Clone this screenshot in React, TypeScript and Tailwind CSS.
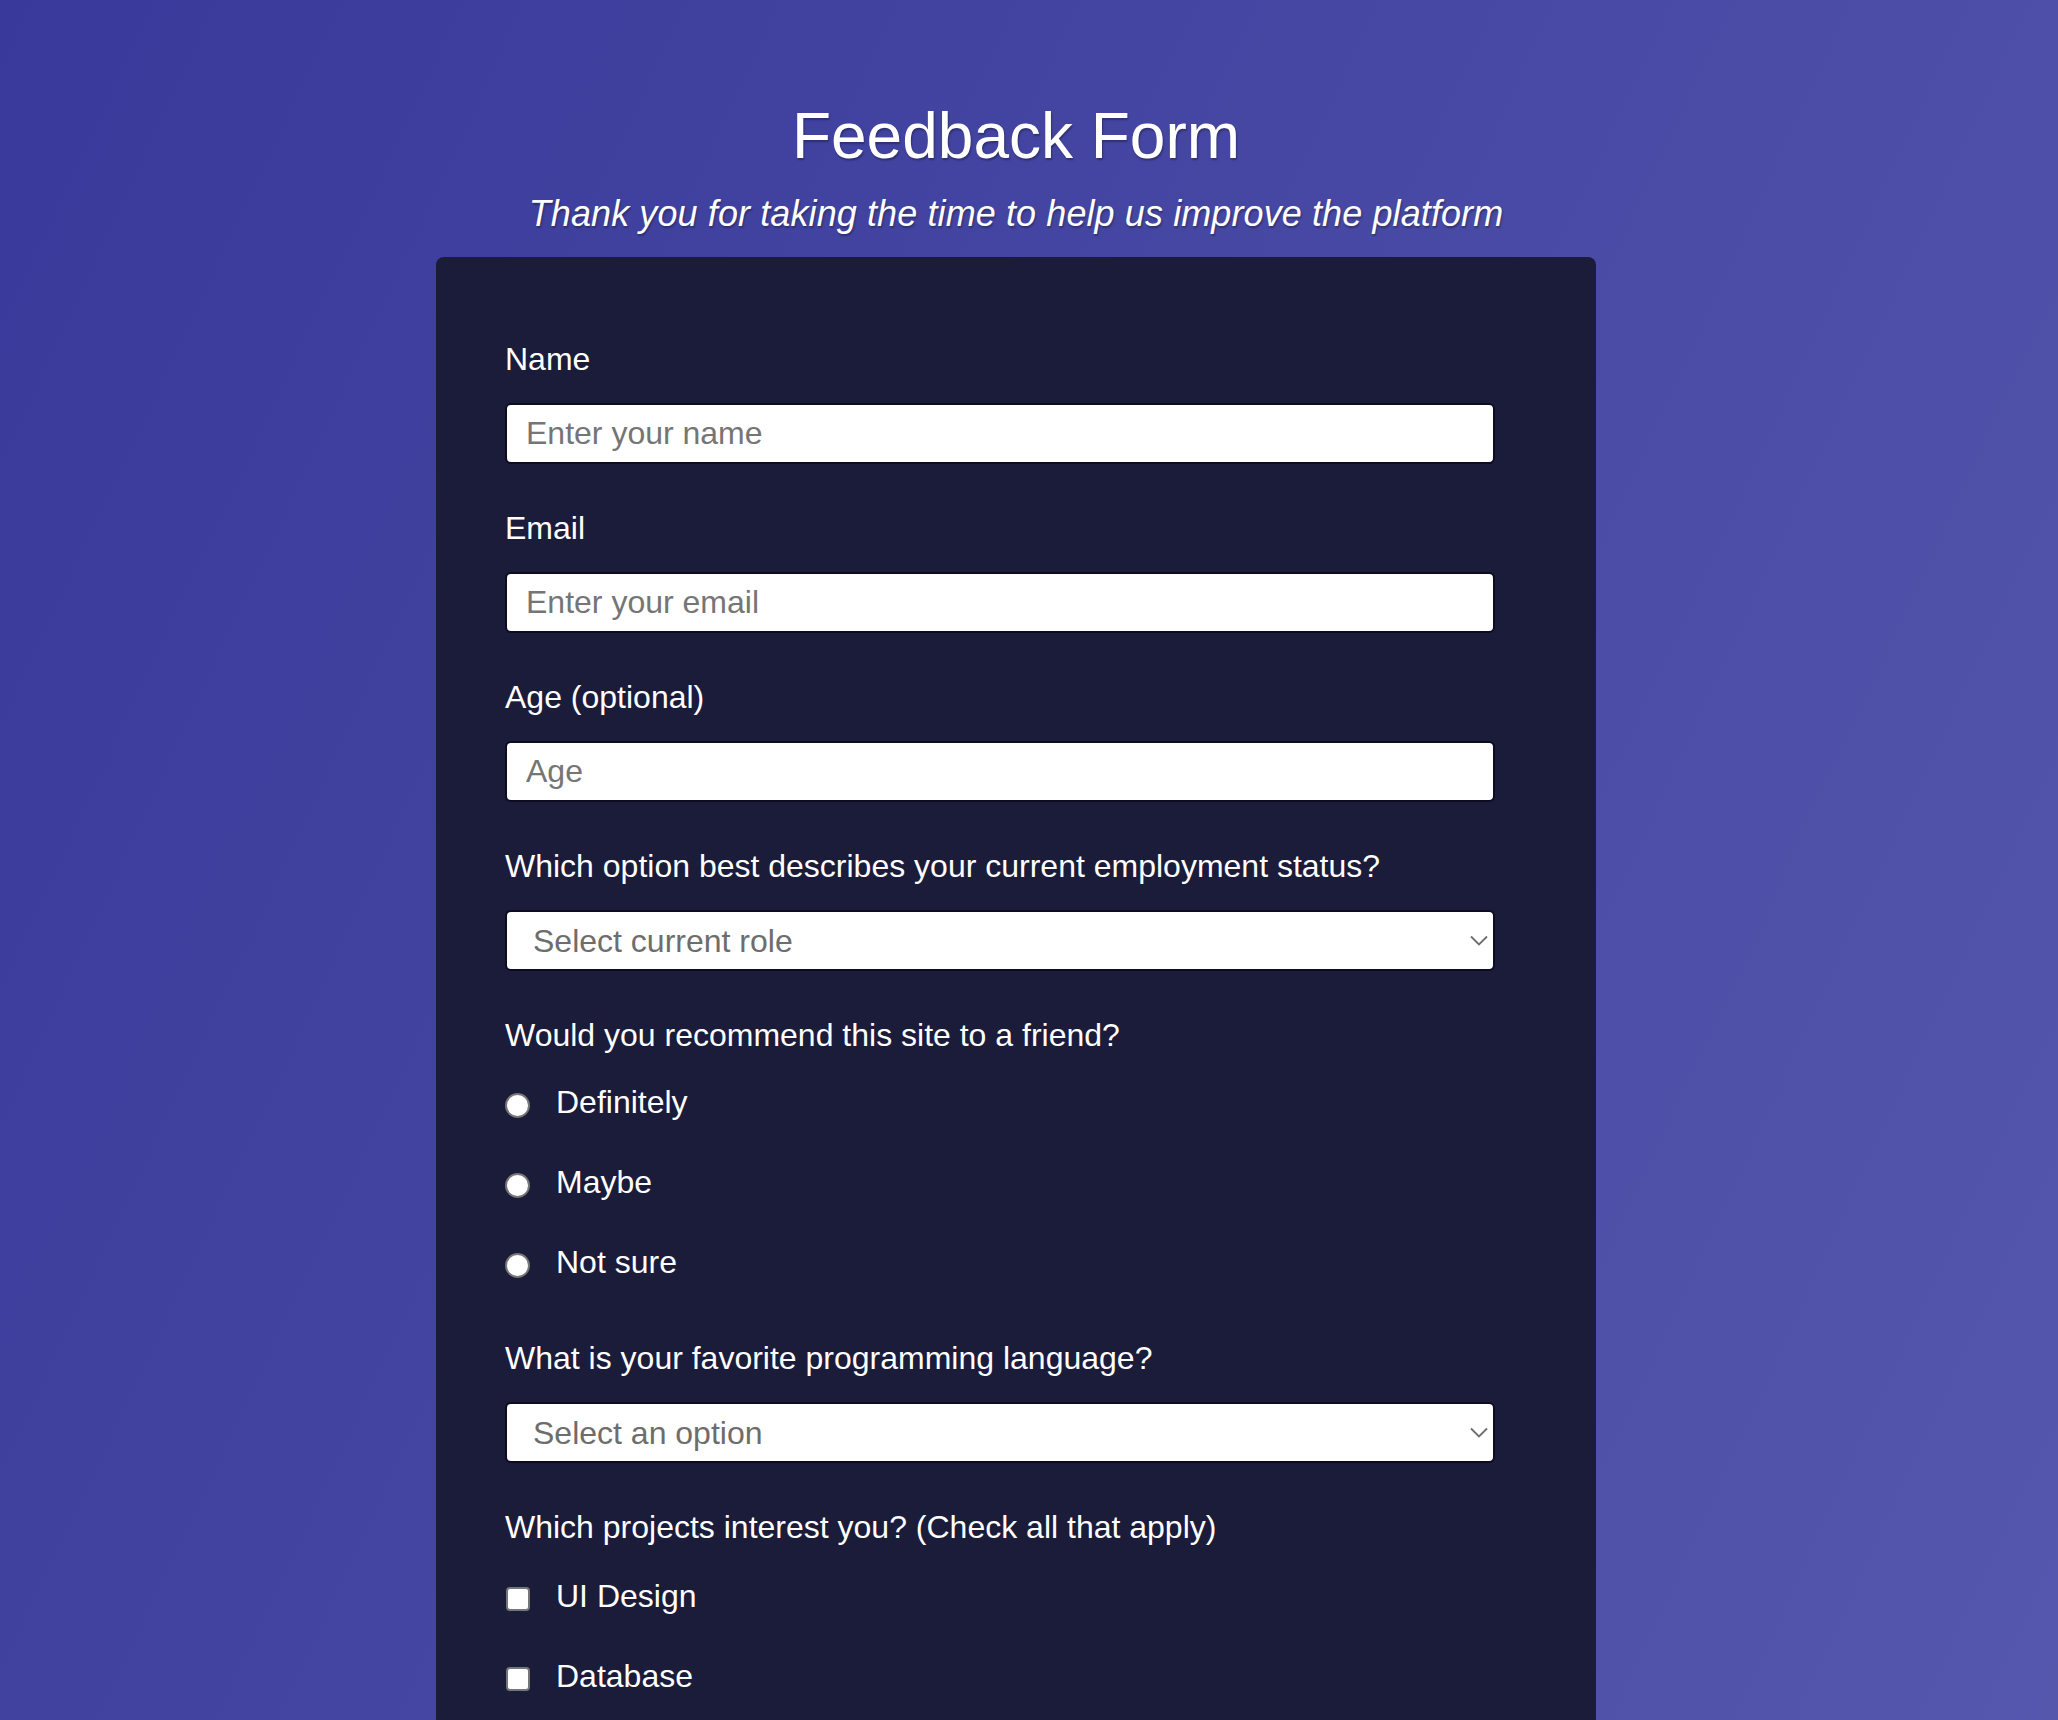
import React from 'react';

const inputClass =
  'block w-[990px] h-[61px] rounded-[6px] border-2 border-[#0c0b22] bg-white pl-[19px] text-[32px] leading-[36px] text-[#222] placeholder:text-[#757575] outline-none';

function Label({ children, htmlFor }: { children: React.ReactNode; htmlFor?: string }) {
  return (
    <label htmlFor={htmlFor} className="block text-[32px] leading-[36px] text-white">
      {children}
    </label>
  );
}

function Field({ label, id, children }: { label: string; id?: string; children: React.ReactNode }) {
  return (
    <div className="flex flex-col gap-[26px]">
      <Label htmlFor={id}>{label}</Label>
      {children}
    </div>
  );
}

function Dropdown({ id, placeholder, options }: { id: string; placeholder: string; options: string[] }) {
  return (
    <div className="relative w-[990px]">
      <select
        id={id}
        defaultValue=""
        className="block w-full h-[61px] appearance-none rounded-[6px] border-2 border-[#0c0b22] bg-white pl-[26px] text-[32px] leading-[36px] text-[#6d6d6d] outline-none"
      >
        <option value="" disabled>
          {placeholder}
        </option>
        {options.map((o) => (
          <option key={o} value={o}>
            {o}
          </option>
        ))}
      </select>
      <svg
        width="18"
        height="11"
        viewBox="0 0 18 11"
        fill="none"
        className="pointer-events-none absolute right-[7px] top-[25px]"
      >
        <polyline points="1,1.5 9,9.5 17,1.5" stroke="#6e6e6e" strokeWidth="1.8" fill="none" />
      </svg>
    </div>
  );
}

function Choice({ type, name, label }: { type: 'radio' | 'checkbox'; name: string; label: string }) {
  return (
    <label className="flex items-start gap-[26px] text-[32px] leading-[36px] text-white">
      {type === 'radio' ? (
        <input
          type="radio"
          name={name}
          value={label}
          className="mt-[9px] h-[25px] w-[25px] shrink-0 appearance-none rounded-full border-2 border-[#767676] bg-white"
        />
      ) : (
        <input
          type="checkbox"
          name={name}
          value={label}
          className="mt-[9px] ml-[1px] h-[24px] w-[24px] shrink-0 appearance-none rounded-[4px] border-2 border-[#767676] bg-white"
        />
      )}
      <span>{label}</span>
    </label>
  );
}

export default function App() {
  return (
    <div className="h-screen overflow-hidden bg-[linear-gradient(115deg,#38399a,#5557ad)] font-['Liberation_Sans',Arial,sans-serif] text-white">
      <div className="flex flex-col items-center pr-[26px]">
        <header className="pt-[100px] text-center [text-shadow:1px_2px_2px_rgba(0,0,0,0.3)]">
          <h1 className="text-[64px] leading-[72px] font-normal">Feedback Form</h1>
          <p className="mt-[22px] text-[36px] leading-[40px] italic tracking-[0.1px]">
            Thank you for taking the time to help us improve the platform
          </p>
        </header>

        <form className="mt-[23px] flex w-[1160px] flex-col gap-[46px] rounded-[8px] bg-[#1b1b3a] pl-[69px] pr-[101px] pt-[84px] pb-[80px]">
          <Field label="Name" id="name">
            <input id="name" type="text" placeholder="Enter your name" className={inputClass} />
          </Field>
          <Field label="Email" id="email">
            <input id="email" type="email" placeholder="Enter your email" className={inputClass} />
          </Field>
          <Field label="Age (optional)" id="age">
            <input id="age" type="number" placeholder="Age" className={inputClass} />
          </Field>
          <Field label="Which option best describes your current employment status?" id="role">
            <Dropdown
              id="role"
              placeholder="Select current role"
              options={['Student', 'Full Time Job', 'Full Time Learner', 'Prefer not to say', 'Other']}
            />
          </Field>

          <div className="mb-[14px] flex flex-col">
            <Label>Would you recommend this site to a friend?</Label>
            <div className="mt-[31px] flex flex-col gap-[44px]">
              <Choice type="radio" name="recommend" label="Definitely" />
              <Choice type="radio" name="recommend" label="Maybe" />
              <Choice type="radio" name="recommend" label="Not sure" />
            </div>
          </div>

          <Field label="What is your favorite programming language?" id="language">
            <Dropdown
              id="language"
              placeholder="Select an option"
              options={['JavaScript', 'TypeScript', 'Python', 'Go', 'Rust']}
            />
          </Field>

          <div className="flex flex-col">
            <Label>Which projects interest you? (Check all that apply)</Label>
            <div className="mt-[33px] flex flex-col gap-[44px]">
              <Choice type="checkbox" name="projects" label="UI Design" />
              <Choice type="checkbox" name="projects" label="Database" />
              <Choice type="checkbox" name="projects" label="Mobile Apps" />
              <Choice type="checkbox" name="projects" label="Open Source" />
            </div>
          </div>

          <Field label="Any comments or suggestions?" id="comments">
            <textarea
              id="comments"
              placeholder="Enter your comment here..."
              className="block h-[240px] w-[990px] resize-none rounded-[6px] border-2 border-[#0c0b22] bg-white px-[19px] py-[12px] text-[32px] text-[#222] placeholder:text-[#757575] outline-none"
            />
          </Field>

          <button
            type="submit"
            className="h-[72px] w-[990px] rounded-[4px] bg-[#37af65] text-[32px] text-white"
          >
            Submit
          </button>
        </form>
      </div>
    </div>
  );
}
